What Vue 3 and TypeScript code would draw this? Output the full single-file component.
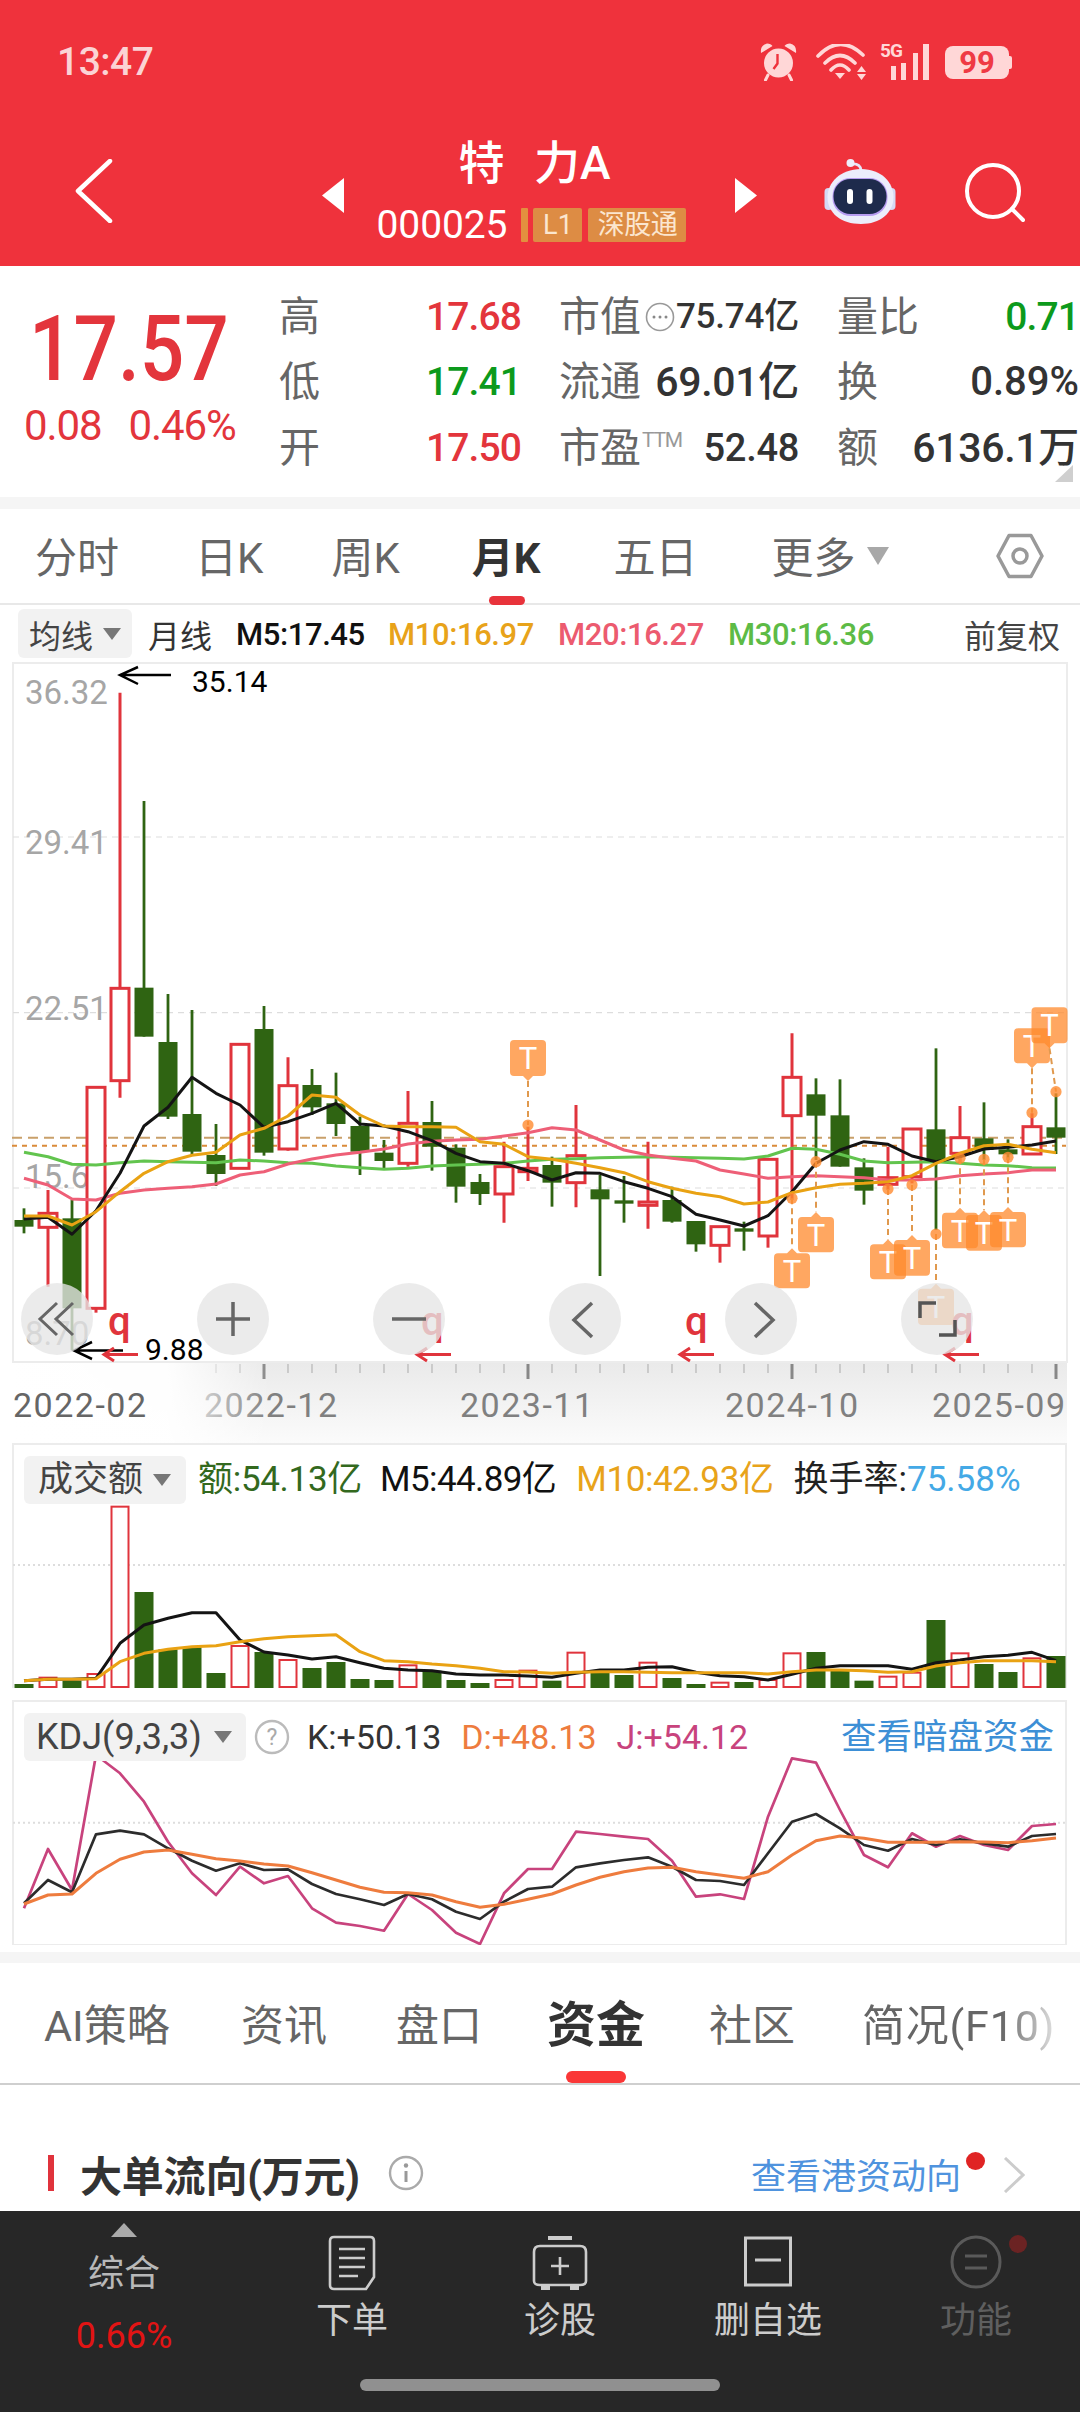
<script setup lang="ts">
type Kind = 'r' | 'g'
interface Candle { k: Kind; h: number; t: number; b: number; l: number }
const ky = (z: number) => 1000 + z / 3
const py = (z: number) => 1440 + z / 3
const cx = (i: number) => 24 + 24 * i

const raw: [Kind, number, number, number, number][] = [
  ['g', 625, 660, 680, 700], ['r', 570, 640, 682, 860], ['g', 600, 655, 925, 1050], ['r', 262, 262, 925, 938],
  ['r', -922, -35, 242, 293], ['g', -597, -37, 110, 110], ['g', -18, 126, 350, 357], ['g', 30, 342, 455, 465],
  ['g', 372, 465, 522, 558], ['r', 133, 133, 505, 505], ['g', 18, 87, 458, 467], ['r', 172, 257, 447, 452],
  ['g', 207, 255, 322, 345], ['g', 218, 310, 372, 408], ['g', 350, 378, 455, 525], ['g', 420, 458, 483, 505],
  ['r', 273, 370, 490, 500], ['g', 303, 366, 440, 512], ['g', 433, 443, 560, 608], ['g', 522, 546, 582, 615],
  ['r', 425, 500, 582, 668], ['r', 380, 505, 515, 543], ['g', 470, 495, 548, 620], ['r', 315, 467, 548, 622],
  ['g', 525, 568, 598, 828], ['g', 528, 601, 611, 668], ['r', 425, 606, 616, 686], ['g', 560, 600, 665, 668],
  ['g', 663, 663, 733, 755], ['r', 680, 680, 736, 788], ['g', 665, 685, 695, 752], ['r', 478, 478, 708, 743],
  ['r', 100, 232, 347, 600], ['g', 235, 283, 347, 480], ['g', 238, 346, 500, 500], ['g', 475, 502, 572, 614],
  ['r', 440, 533, 553, 570], ['r', 387, 387, 530, 550], ['g', 145, 388, 482, 690], ['r', 318, 413, 460, 490],
  ['g', 307, 415, 450, 480], ['g', 418, 448, 463, 480], ['r', 340, 380, 462, 465], ['g', 280, 382, 413, 462],
]
const candles = raw.map(([k, h, t, b, l], i) => {
  const c: Candle = { k, h: ky(h), t: ky(t), b: ky(b), l: ky(l) }
  return { ...c, x: cx(i) }
})

const toLine = (vals: number[], f: (z: number) => number) =>
  vals.map((v, i) => `${cx(i)},${f(v).toFixed(1)}`).join(' ')

const m5 = toLine([657, 652, 703, 632, 520, 378, 322, 232, 280, 315, 382, 365, 340, 310, 372, 378, 395, 422, 460, 485, 490, 512, 540, 518, 520, 545, 565, 590, 643, 660, 678, 647, 575, 490, 450, 425, 433, 468, 485, 470, 447, 442, 435, 423], ky)
const m10 = toLine([648, 648, 675, 635, 575, 520, 485, 466, 457, 405, 385, 348, 285, 292, 345, 378, 380, 380, 382, 425, 433, 470, 478, 490, 503, 518, 545, 565, 580, 590, 612, 606, 578, 563, 553, 550, 545, 527, 490, 460, 437, 433, 448, 458], ky)
const m20 = toLine([535, 555, 597, 600, 580, 570, 565, 560, 552, 525, 515, 492, 477, 465, 457, 447, 432, 424, 420, 418, 408, 398, 383, 390, 420, 450, 465, 475, 483, 510, 522, 535, 530, 527, 530, 533, 540, 540, 537, 527, 522, 518, 510, 510], ky)
const m30 = toLine([457, 470, 493, 495, 488, 483, 485, 487, 488, 480, 483, 488, 490, 498, 503, 508, 505, 498, 495, 493, 490, 483, 478, 476, 473, 472, 470, 472, 473, 475, 477, 468, 445, 448, 463, 483, 488, 487, 485, 490, 495, 497, 503, 504], ky)

interface Badge { x: number; bx: number; dot: number; top: number; bottom: number; up: boolean }
const badges: Badge[] = [
  { x: cx(21), bx: cx(21), dot: ky(375), top: ky(120), bottom: ky(228), up: false },
  { x: cx(32), bx: cx(32), dot: ky(595), top: ky(760), bottom: ky(865), up: true },
  { x: cx(33), bx: cx(33), dot: ky(485), top: ky(651), bottom: ky(757), up: true },
  { x: cx(36), bx: cx(36), dot: ky(567), top: ky(733), bottom: ky(838), up: true },
  { x: cx(37), bx: cx(37), dot: ky(555), top: ky(720), bottom: ky(827), up: true },
  { x: cx(38), bx: cx(38), dot: ky(702), top: ky(866), bottom: ky(975), up: true },
  { x: cx(39), bx: cx(39), dot: ky(475), top: ky(638), bottom: ky(745), up: true },
  { x: cx(40), bx: cx(40), dot: ky(478), top: ky(645), bottom: ky(752), up: true },
  { x: cx(41), bx: cx(41), dot: ky(472), top: ky(636), bottom: ky(742), up: true },
  { x: cx(42), bx: cx(42), dot: ky(338), top: ky(85), bottom: ky(190), up: false },
  { x: cx(43), bx: 1049.5, dot: ky(275), top: ky(22), bottom: ky(130), up: false },
]
const badgePath = (b: Badge) => {
  const l = b.bx - 18, r = b.bx + 18, t = b.top, m = b.bottom, c = b.bx
  if (b.up) {
    return `M${l + 4} ${t}H${c - 5}L${c} ${t - 5}L${c + 5} ${t}H${r - 4}Q${r} ${t} ${r} ${t + 4}V${m - 4}Q${r} ${m} ${r - 4} ${m}H${l + 4}Q${l} ${m} ${l} ${m - 4}V${t + 4}Q${l} ${t} ${l + 4} ${t}Z`
  }
  return `M${l + 4} ${t}H${r - 4}Q${r} ${t} ${r} ${t + 4}V${m - 4}Q${r} ${m} ${r - 4} ${m}H${c + 5}L${c} ${m + 5}L${c - 5} ${m}H${l + 4}Q${l} ${m} ${l} ${m - 4}V${t + 4}Q${l} ${t} ${l + 4} ${t}Z`
}
const badgeLine = (b: Badge) => b.up
  ? `M${b.x} ${b.dot}L${b.bx} ${b.top - 5}`
  : `M${b.bx} ${b.bottom + 5}L${b.x} ${b.dot}`

const smallTicks = Array.from({ length: 44 }, (_, i) => cx(i)).filter((x) => x >= 216 && ![264, 528, 792, 1056].includes(x))
const bigTicks = [264, 528, 792, 1056]
const circles = [57, 233, 409, 585, 761, 937]
const watermarks = [{ q: 108, a: 102 }, { q: 421, a: 415 }, { q: 685, a: 678 }, { q: 951, a: 943 }]

const volTops = [732, 713, 722, 702, 200, 456, 628, 622, 699, 618, 636, 660, 684, 666, 717, 720, 676, 692, 720, 729, 720, 692, 722, 638, 698, 705, 668, 714, 732, 728, 726, 720, 640, 636, 690, 722, 710, 698, 540, 640, 672, 696, 655, 648]
const bars = volTops.map((z, i) => ({ x: cx(i), y: py(z), h: 1688 - py(z), k: raw[i][0] }))
const vm5 = toLine([722, 718, 718, 715, 610, 555, 535, 518, 518, 600, 636, 645, 657, 650, 668, 685, 690, 692, 702, 705, 705, 708, 712, 700, 690, 690, 682, 680, 697, 707, 710, 720, 703, 685, 677, 677, 677, 688, 668, 660, 650, 646, 637, 662], py)
const vm10 = toLine([722, 718, 718, 716, 665, 640, 628, 620, 617, 605, 596, 590, 587, 584, 635, 662, 665, 672, 677, 685, 695, 696, 700, 697, 695, 695, 697, 698, 698, 698, 698, 702, 695, 690, 690, 692, 697, 695, 678, 668, 662, 662, 662, 665], py)

const kLine = toLine([1390, 1320, 1357, 1183, 1172, 1183, 1225, 1262, 1292, 1270, 1290, 1288, 1332, 1362, 1378, 1395, 1362, 1378, 1415, 1437, 1385, 1347, 1340, 1282, 1270, 1260, 1252, 1280, 1320, 1323, 1335, 1240, 1145, 1122, 1165, 1215, 1232, 1197, 1215, 1198, 1210, 1220, 1188, 1182], py)
const dLine = toLine([1392, 1365, 1362, 1300, 1258, 1236, 1230, 1243, 1256, 1263, 1272, 1278, 1298, 1320, 1342, 1357, 1358, 1365, 1385, 1402, 1393, 1378, 1362, 1335, 1312, 1295, 1284, 1282, 1295, 1305, 1315, 1295, 1245, 1202, 1188, 1195, 1207, 1207, 1207, 1205, 1206, 1208, 1202, 1194], py)
const jLine = toLine([1405, 1227, 1350, 945, 1000, 1085, 1205, 1300, 1365, 1280, 1330, 1308, 1405, 1448, 1458, 1472, 1362, 1410, 1478, 1512, 1360, 1287, 1287, 1175, 1182, 1190, 1197, 1262, 1370, 1363, 1377, 1130, 955, 968, 1110, 1245, 1282, 1180, 1220, 1188, 1215, 1230, 1158, 1152], py)

const periods = ['分时', '日K', '周K', '月K', '五日']
const stats = [
  { label: '高', value: '17.68', cls: 'up' }, { label: '市值', icon: true, value: '75.74亿', cls: 'dark s35' }, { label: '量比', value: '0.71', cls: 'down' },
  { label: '低', value: '17.41', cls: 'down' }, { label: '流通', value: '69.01亿', cls: 'dark s41' }, { label: '换', value: '0.89%', cls: 'dark s40' },
  { label: '开', value: '17.50', cls: 'up' }, { label: '市盈', sup: 'TTM', value: '52.48', cls: 'dark s38' }, { label: '额', value: '6136.1万', cls: 'dark s41' },
]
const lowerTabs = ['AI策略', '资讯', '盘口', '资金', '社区', '简况(F10)']
</script>

<template>
  <div class="app">
    <header class="head">
      <div class="status">
        <span class="time">13:47</span>
        <div class="status-icons">
          <svg class="ic-alarm" width="38" height="38" viewBox="0 0 38 38">
            <circle cx="18.5" cy="20" r="14.5" fill="#ffd7d7" />
            <path d="M17.5 11V20.5L13.5 26" fill="none" stroke="#ef323c" stroke-width="2.4" />
            <path d="M1 10Q0 2 7 0.5Q11 0.5 12.5 3ZM36 10Q37 2 30 0.5Q26 0.5 24.5 3Z" fill="#ffd7d7" />
            <path d="M8 32L5.5 37M29 32L31.5 37" fill="none" stroke="#ffd7d7" stroke-width="3" stroke-linecap="round" />
          </svg>
          <svg class="ic-wifi" width="51" height="36" viewBox="0 0 51 36">
            <path d="M2 12Q24 -11 47 11M9 19Q24 4 39 19M15 26Q24 16 33 26" fill="none" stroke="#ffd7d7" stroke-width="3.6" stroke-linecap="round" />
            <path d="M19 29H29L24 35Z" fill="#ffd7d7" />
            <path d="M41 28H50L45.5 22ZM41 30H50L45.5 36Z" fill="#ffd7d7" />
          </svg>
          <div class="signal">
            <span class="five-g">5G</span>
            <svg width="40" height="36" viewBox="0 0 40 36">
              <path d="M2 22H7V36H2ZM12 19H17V36H12ZM24 9H29V36H24ZM34 0H40V36H34Z" fill="#ffd7d7" />
            </svg>
          </div>
          <div class="battery"><span>99</span></div>
        </div>
      </div>
      <nav class="nav">
        <svg class="back" width="38" height="64" viewBox="0 0 38 64">
          <path d="M35 2L3 32L35 62" fill="none" stroke="#fff" stroke-width="4.5" stroke-linecap="round" stroke-linejoin="round" />
        </svg>
        <svg class="tri-l" width="22" height="35" viewBox="0 0 22 35"><path d="M22 0V35L0 17.5Z" fill="#fff" /></svg>
        <div class="title-block">
          <div class="title">特 力A</div>
          <div class="code-row">
            <span class="code">000025</span>
            <i class="tag-bar"></i>
            <span class="tag tag-l1">L1</span>
            <span class="tag tag-sg">深股通</span>
          </div>
        </div>
        <svg class="tri-r" width="22" height="35" viewBox="0 0 22 35"><path d="M0 0V35L22 17.5Z" fill="#fff" /></svg>
        <svg class="robot" width="72" height="66" viewBox="0 0 72 66">
          <path d="M27 5Q36 4 37 11" fill="none" stroke="#e6e6f8" stroke-width="2.6" />
          <circle cx="26.5" cy="4" r="4" fill="#eeeefa" />
          <rect x="0.5" y="29" width="8" height="22" rx="4" fill="#d5d9f5" />
          <rect x="63.5" y="29" width="8" height="22" rx="4" fill="#d5d9f5" />
          <path d="M37 10C58 10 69.500 24 69.500 38C69.500 54 56 65 37 65C17 65 3.500 54 3.500 38C3.500 24 16 10 37 10Z" fill="#ecedfb" />
          <rect x="8.500" y="19" width="55" height="38" rx="18" fill="#b79cf0" />
          <rect x="9.500" y="20" width="53" height="35" rx="17" fill="#1e2b4c" />
          <rect x="23" y="30" width="6" height="15" rx="3" fill="#fff" />
          <rect x="42.500" y="30" width="6" height="15" rx="3" fill="#fff" />
        </svg>
        <svg class="search" width="60" height="62" viewBox="0 0 60 62">
          <circle cx="28" cy="30" r="26" fill="none" stroke="#fff" stroke-width="4" />
          <path d="M47 48L58 59" stroke="#fff" stroke-width="4" stroke-linecap="round" />
        </svg>
      </nav>
    </header>

    <section class="stats">
      <div class="price">
        <div class="price-main">17.57</div>
        <div class="price-sub"><span>0.08</span><span>0.46%</span></div>
      </div>
      <div class="stat-grid">
        <div v-for="s in stats" :key="s.label" class="stat">
          <span class="stat-label">{{ s.label }}<svg v-if="s.icon" class="chat" width="30" height="30" viewBox="0 0 30 30"><circle cx="15" cy="15" r="13.5" fill="none" stroke="#999" stroke-width="1.6" /><circle cx="9" cy="15" r="1.5" fill="#888" /><circle cx="15" cy="15" r="1.5" fill="#888" /><circle cx="21" cy="15" r="1.5" fill="#888" /></svg><sup v-if="s.sup">{{ s.sup }}</sup></span>
          <span class="stat-val" :class="s.cls">{{ s.value }}</span>
        </div>
      </div>
      <i class="corner"></i>
    </section>
    <div class="gap gap-a"></div>

    <section class="periods">
      <span v-for="(p, i) in periods" :key="p" class="period" :class="{ on: i === 3 }">{{ p }}</span>
      <span class="period more">更多<i class="tri-down"></i></span>
      <svg class="hex" width="48" height="46" viewBox="0 0 48 46">
        <path d="M13 2.5H35L46 23L35 43.5H13L2 23Z" fill="none" stroke="#999" stroke-width="3.5" stroke-linejoin="round" />
        <circle cx="24" cy="23" r="7" fill="none" stroke="#999" stroke-width="3.5" />
      </svg>
    </section>

    <section class="legend">
      <span class="chip chip-ma">均线<i class="tri-chip"></i></span>
      <span class="lg-cn">月线</span>
      <span class="lg lg-m5">M5:17.45</span>
      <span class="lg lg-m10">M10:16.97</span>
      <span class="lg lg-m20">M20:16.27</span>
      <span class="lg lg-m30">M30:16.36</span>
      <span class="lg-fq">前复权</span>
    </section>

    <svg class="kchart" width="1080" height="781" viewBox="0 662 1080 781">
      <defs>
        <linearGradient id="axisFade" x1="0" y1="0" x2="0" y2="1">
          <stop offset="0" stop-color="#eaeaea" />
          <stop offset="1" stop-color="#fbfbfb" />
        </linearGradient>
        <linearGradient id="axisMask" x1="0" y1="0" x2="1" y2="0">
          <stop offset="0" stop-color="#fff" />
          <stop offset="0.62" stop-color="#fff" stop-opacity="0.95" />
          <stop offset="1" stop-color="#fff" stop-opacity="0" />
        </linearGradient>
      </defs>
      <rect x="13" y="663" width="1054" height="699" fill="#fff" stroke="#ececec" stroke-width="2" />
      <g stroke="#ddd" stroke-width="1.2" stroke-dasharray="6 5">
        <path d="M13 837H1064M13 1012.7H1064M13 1188H1064" />
      </g>
      <g class="axis-label" fill="#a6a6a6" font-size="33">
        <text x="25" y="704">36.32</text>
        <text x="25" y="854">29.41</text>
        <text x="25" y="1020">22.51</text>
        <text x="25" y="1188">15.60</text>
        <text x="25" y="1345">8.70</text>
      </g>
      <g class="mono" fill="#000" font-size="30">
        <text x="192" y="692">35.14</text>
        <text x="145" y="1360">9.88</text>
      </g>
      <path d="M171 675H121M138 667L120 675L138 684" fill="none" stroke="#000" stroke-width="2.5" />
      <path d="M123 1350.5H75M92 1342L74 1350.5L92 1359" fill="none" stroke="#000" stroke-width="2.5" />

      <path d="M12 1137.7H1066" stroke="#c9a06a" stroke-width="2" stroke-dasharray="10 6" />
      <path d="M12 1145.7H1066" stroke="#da8b3a" stroke-width="2" stroke-dasharray="5 5" />

      <g v-for="(c, i) in candles" :key="i">
        <template v-if="c.k === 'r'">
          <path :d="`M${c.x} ${c.h}V${c.t}M${c.x} ${c.b}V${c.l}`" stroke="#e0343c" stroke-width="3" />
          <rect :x="c.x - 9" :y="c.t" width="18" :height="c.b - c.t" fill="#fff" stroke="#e0343c" stroke-width="3" />
        </template>
        <template v-else>
          <path :d="`M${c.x} ${c.h}V${c.l}`" stroke="#2f6412" stroke-width="2.8" />
          <rect :x="c.x - 9.5" :y="c.t" width="19" :height="c.b - c.t" fill="#2f6412" />
        </template>
      </g>

      <g fill="none" stroke-width="3" stroke-linejoin="round">
        <polyline :points="m30" stroke="#62c44e" />
        <polyline :points="m20" stroke="#ee5f77" />
        <polyline :points="m5" stroke="#141414" />
        <polyline :points="m10" stroke="#e9a213" />
      </g>

      <g v-for="(b, i) in badges" :key="'b' + i">
        <path :d="badgeLine(b)" stroke="#e0994e" stroke-width="2" stroke-dasharray="6 4" />
        <circle :cx="b.x" :cy="b.dot" r="5.6" fill="#ff8b2f" fill-opacity="0.8" />
        <path :d="badgePath(b)" fill="#ff8a2c" fill-opacity="0.75" />
        <text class="t-mark" :x="b.bx" :y="(b.top + b.bottom) / 2 + 11" text-anchor="middle" fill="#fff" font-size="31">T</text>
      </g>

      <g v-for="w in watermarks" :key="w.q">
        <text class="mono" :x="w.q" y="1335" fill="#e0343c" font-size="40" font-weight="500">q</text>
        <path :d="`M${w.a + 36} 1354.5H${w.a + 2}M${w.a + 12} 1348L${w.a + 2} 1354.5L${w.a + 12} 1361`" fill="none" stroke="#e0343c" stroke-width="3" />
      </g>

      <rect x="13" y="1363" width="1054" height="80" fill="url(#axisFade)" />
      <g stroke="#bdbdbd" stroke-width="1.4">
        <path v-for="x in smallTicks" :key="x" :d="`M${x} 1364V1373`" />
      </g>
      <g stroke="#888" stroke-width="3">
        <path v-for="x in bigTicks" :key="x" :d="`M${x} 1364V1379`" />
      </g>
      <g class="date" fill="#808080" font-size="34">
        <text x="204" y="1417">2022-12</text>
        <text x="460" y="1417">2023-11</text>
        <text x="725" y="1417">2024-10</text>
        <text x="932" y="1417">2025-09</text>
      </g>
      <rect x="0" y="1363" width="270" height="80" fill="url(#axisMask)" />
      <text class="date" x="13" y="1417" fill="#666" font-size="34">2022-02</text>

      <circle v-for="x in circles" :key="x" :cx="x" cy="1319" r="36" fill="#e6e6e6" fill-opacity="0.78" />
      <g fill="none" stroke="#666" stroke-width="3.5">
        <path d="M57 1303L40 1319L57 1335M73 1303L56 1319L73 1335" stroke-width="3" />
        <path d="M216 1319H250M233 1302V1336" />
        <path d="M392 1319H426" />
        <path d="M592 1303L574 1320L592 1337" />
        <path d="M755 1303L773 1320L755 1337" />
        <path d="M920 1318V1303H936M955 1320V1335H939" stroke="#555" />
      </g>
    </svg>

    <section class="panel vol">
      <svg width="1080" height="245" viewBox="0 1443 1080 245">
        <path d="M13 1688V1444H1066V1688" fill="none" stroke="#ececec" stroke-width="2" />
        <path d="M13 1565H1066" stroke="#ddd" stroke-width="2" stroke-dasharray="2 3" />
        <g v-for="(b, i) in bars" :key="i">
          <rect v-if="b.k === 'g'" :x="b.x - 9.5" :y="b.y" width="19" :height="b.h" fill="#2f6412" />
          <rect v-else :x="b.x - 8.5" :y="b.y" width="17" :height="b.h - 1" fill="#fff" stroke="#e0343c" stroke-width="2" />
        </g>
        <g fill="none" stroke-width="3" stroke-linejoin="round">
          <polyline :points="vm5" stroke="#141414" />
          <polyline :points="vm10" stroke="#e9a213" />
        </g>
      </svg>
      <div class="panel-head">
        <span class="chip chip-vol">成交额<i class="tri-chip"></i></span>
        <span class="v-amt">额:54.13亿</span>
        <span class="v-m5">M5:44.89亿</span>
        <span class="v-m10">M10:42.93亿</span>
        <span class="v-hs">换手率:<b>75.58%</b></span>
      </div>
    </section>

    <section class="panel kdj">
      <svg width="1080" height="245" viewBox="0 1700 1080 245">
        <path d="M13 1945V1701H1066V1945Z" fill="none" stroke="#ececec" stroke-width="2" />
        <path d="M13 1822.7H1066" stroke="#ddd" stroke-width="2" stroke-dasharray="2 3" />
        <g fill="none" stroke-linejoin="round">
          <polyline :points="jLine" stroke="#c8437d" stroke-width="2.7" />
          <polyline :points="kLine" stroke="#2c2c2c" stroke-width="2.7" />
          <polyline :points="dLine" stroke="#ee7c3e" stroke-width="3" />
        </g>
      </svg>
      <div class="panel-head">
        <span class="chip chip-kdj">KDJ(9,3,3)<i class="tri-chip"></i></span>
        <svg class="help" width="36" height="36" viewBox="0 0 36 36">
          <circle cx="18" cy="18" r="16" fill="none" stroke="#bbb" stroke-width="2.4" />
          <text x="18" y="26" text-anchor="middle" fill="#aaa" font-size="23" class="mono">?</text>
        </svg>
        <span class="k-k">K:+50.13</span>
        <span class="k-d">D:+48.13</span>
        <span class="k-j">J:+54.12</span>
        <span class="k-link">查看暗盘资金</span>
      </div>
    </section>
    <div class="gap gap-b"></div>

    <section class="lower-tabs">
      <span v-for="(t, i) in lowerTabs" :key="t" class="ltab" :class="{ on: i === 3, fade: i === 5 }">{{ t }}</span>
      <i class="ltab-bar"></i>
    </section>

    <section class="flow-head">
      <i class="flow-mark"></i>
      <span class="flow-title">大单流向(万元)</span>
      <svg class="info" width="36" height="36" viewBox="0 0 36 36">
        <circle cx="18" cy="18" r="16" fill="none" stroke="#aaa" stroke-width="2.4" />
        <circle cx="18" cy="10.5" r="2.2" fill="#999" />
        <path d="M18 16V27" stroke="#999" stroke-width="3" />
      </svg>
      <span class="flow-link">查看港资动向<i class="dot"></i></span>
      <svg class="chev" width="22" height="36" viewBox="0 0 22 36"><path d="M2 1L20 18L2 35" fill="none" stroke="#ccc" stroke-width="3" /></svg>
    </section>

    <footer class="bar">
      <div class="bar-item first">
        <svg width="26" height="14" viewBox="0 0 26 14"><path d="M13 0L26 14H0Z" fill="#aaa" /></svg>
        <span class="first-name">综合</span>
        <span class="first-val">0.66%</span>
      </div>
      <div class="bar-item">
        <svg class="bi" width="48" height="56" viewBox="0 0 48 56" fill="none" stroke="#ccc" stroke-width="2.6">
          <path d="M6 2H42Q46 2 46 6V42L38 54H6Q2 54 2 50V6Q2 2 6 2Z" />
          <path d="M11 14H37M11 23H37M11 32H37M11 41H30" />
        </svg>
        <span class="bar-label">下单</span>
      </div>
      <div class="bar-item">
        <svg class="bi" width="56" height="56" viewBox="0 0 56 56" fill="none" stroke="#ccc" stroke-width="2.6">
          <path d="M16 3H40" stroke-width="4" />
          <path d="M8 11H48Q54 11 54 17V46Q54 50 48 50H8Q2 50 2 46V17Q2 11 8 11Z" />
          <path d="M28 22V40M19 31H37" />
          <path d="M9 53H18M38 53H47" stroke-width="4" />
        </svg>
        <span class="bar-label">诊股</span>
      </div>
      <div class="bar-item">
        <svg class="bi" width="48" height="56" viewBox="0 0 48 56" fill="none" stroke="#ccc" stroke-width="3">
          <rect x="1.5" y="3" width="45" height="47" />
          <path d="M11 25H37" />
        </svg>
        <span class="bar-label">删自选</span>
      </div>
      <div class="bar-item dim">
        <svg class="bi" width="52" height="56" viewBox="0 0 52 56" fill="none" stroke="#5a5a5a" stroke-width="3">
          <ellipse cx="26" cy="27" rx="24" ry="25" />
          <path d="M15 21H37M15 33H37" />
        </svg>
        <span class="bar-label">功能</span>
        <i class="bar-dot"></i>
      </div>
      <i class="home"></i>
    </footer>
  </div>
</template>

<style>
html, body { margin: 0; padding: 0; background: #fff; }
</style>

<style scoped>
.app {
  position: relative; width: 1080px; height: 2412px; overflow: hidden; display: flex; flex-direction: column;
  background: #fff; color: #333; font-family: Roboto, "Noto Sans CJK SC", sans-serif;
}
i { display: block; font-style: normal; }
.head { height: 266px; background: #ef323c; color: #fff; flex: none; }
.status { height: 124px; display: flex; align-items: center; justify-content: space-between; padding: 0 71px 0 57px; box-sizing: border-box; }
.time { font-size: 39px; color: #fbd3d5; letter-spacing: -0.5px; font-weight: 500; }
.status-icons { display: flex; align-items: center; }
.ic-wifi { margin-left: 18px; }
.signal { position: relative; margin-left: 22px; width: 40px; height: 36px; }
.signal svg { display: block; }
.five-g { position: absolute; left: -9px; top: -1px; font-size: 19px; line-height: 16px; color: #ffd7d7; font-weight: 700; letter-spacing: -0.8px; }
.battery { margin-left: 16px; width: 64px; height: 33px; background: #ffd7d7; border-radius: 8px; position: relative; display: flex; align-items: center; justify-content: center; }
.battery span { color: #ef3a44; font-size: 31px; font-weight: 700; line-height: 33px; }
.battery::after { content: ""; position: absolute; right: -3px; top: 10px; width: 3px; height: 13px; background: #ffd7d7; border-radius: 0 2px 2px 0; }
.nav { height: 142px; display: flex; align-items: center; position: relative; }
.back { margin-left: 75px; margin-top: -8px; flex: none; }
.tri-l { margin-left: 209px; flex: none; }
.tri-r { flex: none; }
.title-block { width: 391px; flex: none; display: flex; flex-direction: column; align-items: center; padding-right: 16px; box-sizing: border-box; margin-top: -1px; }
.title { font-size: 46px; line-height: 50px; word-spacing: 18px; font-weight: 500; margin-bottom: 20px; margin-left: 6px; margin-top: -9px; }
.code-row { display: flex; align-items: center; height: 34px; }
.code { font-size: 39px; line-height: 34px; letter-spacing: -0.1px; }
.tag-bar { width: 7px; height: 34px; background: #e38f3f; margin-left: 14px; border-radius: 1px; }
.tag { height: 34px; line-height: 34px; background: #dd8c44; color: #fbe6cf; text-align: center; border-radius: 2px; font-size: 27px; }
.tag-l1 { width: 49px; margin-left: 5px; }
.tag-sg { width: 98px; margin-left: 6px; letter-spacing: -0.6px; }
.robot { margin-left: 67px; margin-top: -6px; flex: none; }
.search { margin-left: 69px; margin-top: -6px; flex: none; }

.stats { height: 231px; flex: none; display: flex; position: relative; }
.price { width: 281px; flex: none; display: flex; flex-direction: column; align-items: flex-start; box-sizing: border-box; padding-top: 50px; }
.price-main { font-size: 90px; line-height: 68px; color: #e3353c; font-weight: 500; margin-left: 29px; width: 226px; transform: scaleX(0.87); transform-origin: left center; white-space: nowrap; }
.price-sub { display: flex; gap: 27px; margin-top: 24px; margin-left: 24px; font-size: 42px; line-height: 36px; color: #e3353c; letter-spacing: -1.1px; }
.stat-grid { display: grid; grid-template-columns: 240px 238px 240px; column-gap: 40px; grid-auto-rows: 65.5px; padding-top: 18px; }
.stat { display: flex; align-items: center; justify-content: space-between; white-space: nowrap; }
.stat-label { font-size: 41px; color: #666; display: flex; align-items: center; line-height: 50px; margin-left: -2px; }
.stat-label sup { font-size: 21px; line-height: 20px; color: #999; align-self: flex-start; margin-top: 7px; margin-left: 1px; letter-spacing: -1.2px; }
.chat { margin-left: 4px; }
.stat-val { font-size: 39px; line-height: 50px; letter-spacing: -0.9px; font-weight: 500; }
.stat-val.up { color: #e3353c; }
.stat-val.down { color: #0c9a1c; }
.stat-val.dark { color: #333; }
.stat-val.s35 { font-size: 35px; letter-spacing: -0.2px; }
.stat-val.s38 { font-size: 38px; letter-spacing: -0.3px; }
.stat-val.s40 { font-size: 40px; letter-spacing: 0; }
.stat-val.s41 { font-size: 41px; letter-spacing: -0.3px; }
.corner { position: absolute; right: 7px; bottom: 15px; width: 0; height: 0; border-left: 18px solid transparent; border-bottom: 17px solid #cfcfcf; }
.gap { background: #f5f5f5; flex: none; }
.gap-a { height: 12px; }
.gap-b { height: 11px; }

.periods { height: 96px; flex: none; display: flex; align-items: center; position: relative; box-sizing: border-box; border-bottom: 2px solid #e8e8e8; padding-left: 35px; padding-top: 6px; }
.period { font-size: 42px; line-height: 50px; color: #666; white-space: nowrap; }
.period:nth-child(2) { margin-left: 76px; }
.period:nth-child(3) { margin-left: 68px; }
.period:nth-child(4) { margin-left: 72px; }
.period:nth-child(5) { margin-left: 73px; }
.period.on { color: #333; font-weight: 700; position: relative; }
.period.on::after { content: ""; position: absolute; left: 17px; width: 36px; top: 62px; height: 9px; border-radius: 5px; background: #e8333b; }
.more { margin-left: 74px; display: flex; align-items: center; }
.tri-down { margin-left: 12px; margin-top: -6px; width: 0; height: 0; border-left: 11px solid transparent; border-right: 11px solid transparent; border-top: 18px solid #a8a8a8; }
.hex { position: absolute; left: 996px; top: 24px; }

.legend { height: 57px; flex: none; display: flex; align-items: center; white-space: nowrap; position: relative; }
.chip { background: #f2f2f2; border-radius: 6px; display: flex; align-items: center; color: #444; flex: none; box-sizing: border-box; }
.chip-ma { width: 114px; height: 49px; margin-left: 18px; padding-left: 11px; font-size: 32px; }
.tri-chip { width: 0; height: 0; border-left: 9px solid transparent; border-right: 9px solid transparent; border-top: 12px solid #777; margin-left: 10px; }
.lg-cn { margin-left: 16px; font-size: 32px; color: #333; }
.lg { position: absolute; top: 10px; font-size: 31px; font-weight: 500; letter-spacing: -0.4px; line-height: 40px; }
.lg-m5 { left: 236px; color: #111; }
.lg-m10 { left: 388px; color: #e8a31a; }
.lg-m20 { left: 558px; color: #ec5b6f; }
.lg-m30 { left: 728px; color: #5dbb46; }
.lg-fq { position: absolute; left: 964px; font-size: 32px; color: #444; }

.kchart { display: block; flex: none; }
.axis-label text, .date text, .date, .mono, .mono text { font-family: Roboto, sans-serif; }
.date, .date text { letter-spacing: 1.5px; }
.t-mark { font-family: Roboto, sans-serif; }

.panel { height: 257px; flex: none; position: relative; }
.panel svg:first-child { display: block; }
.kdj { height: 252px; }
.panel-head { position: absolute; left: 24px; top: 13px; display: flex; align-items: center; white-space: nowrap; font-size: 35px; line-height: 48px; }
.kdj .panel-head { top: 13px; right: 26px; font-size: 34px; }
.chip-vol { width: 162px; height: 48px; padding-left: 14px; font-size: 35px; }
.chip-kdj { width: 222px; height: 48px; padding-left: 12px; font-size: 36px; }
.chip-kdj .tri-chip { margin-left: 12px; }
.v-amt { color: #33691e; margin-left: 12px; letter-spacing: -0.3px; }
.v-m5 { color: #111; margin-left: 18px; letter-spacing: -0.6px; }
.v-m10 { color: #e8a31a; margin-left: 20px; letter-spacing: -0.4px; }
.v-hs { color: #222; margin-left: 20px; }
.v-hs b { color: #44a9e6; font-weight: 400; }
.help { margin-left: 8px; flex: none; }
.k-k { color: #333; margin-left: 17px; }
.k-d { color: #ee7c3e; margin-left: 20px; }
.k-j { color: #c8437d; margin-left: 20px; }
.k-link { color: #3d8fd6; margin-left: auto; font-size: 35.5px; }

.lower-tabs { height: 122px; flex: none; position: relative; display: flex; align-items: center; box-sizing: border-box; border-bottom: 2px solid #cfcfcf; padding-bottom: 0; }
.ltab { position: absolute; font-size: 43px; line-height: 60px; top: 33px; color: #666; white-space: nowrap; }
.ltab:nth-child(1) { left: 44px; }
.ltab:nth-child(2) { left: 241px; }
.ltab:nth-child(3) { left: 396px; }
.ltab:nth-child(4) { left: 547px; font-size: 49px; font-weight: 700; color: #333; }
.ltab:nth-child(5) { left: 709px; }
.ltab:nth-child(6) { left: 862px; font-size: 43px; letter-spacing: 0.8px; -webkit-mask-image: linear-gradient(to right, #000 72%, rgba(0,0,0,0.2) 100%); mask-image: linear-gradient(to right, #000 72%, rgba(0,0,0,0.2) 100%); }
.ltab-bar { position: absolute; left: 566px; width: 60px; bottom: 0; height: 12px; border-radius: 6px; background: #fa3737; }

.flow-head { height: 126px; flex: none; position: relative; display: flex; align-items: center; box-sizing: border-box; padding-top: 50px; }
.flow-mark { width: 6px; height: 36px; background: #e0333c; margin-left: 48px; flex: none; }
.flow-title { font-size: 42px; font-weight: 700; color: #333; margin-left: 26px; letter-spacing: -0.2px; white-space: nowrap; }
.info { margin-left: 28px; flex: none; }
.flow-link { position: absolute; left: 751px; font-size: 35px; color: #4f93de; white-space: nowrap; }
.dot { position: absolute; right: -24px; top: 4px; width: 19px; height: 18px; background: #e02424; border-radius: 50%; }
.chev { position: absolute; left: 1003px; top: 72px; }

.bar { flex: 1; background: #272727; display: grid; grid-template-columns: 248px 208px 208px 208px 208px; position: relative; }
.bar-item { display: flex; flex-direction: column; align-items: center; padding-top: 24px; position: relative; }
.bi { height: 56px; flex: none; }
.bar-label { font-size: 36px; line-height: 40px; color: #ccc; margin-top: 10px; white-space: nowrap; }
.first { padding-top: 12px; }
.first-name { font-size: 36px; line-height: 40px; color: #b8b8b8; margin-top: 17px; }
.first-val { font-size: 36px; line-height: 40px; color: #e21414; margin-top: 22px; }
.dim .bar-label { color: #5f5f5f; }
.bar-dot { position: absolute; left: 137px; top: 24px; width: 18px; height: 18px; border-radius: 50%; background: #6b2323; }
.home { position: absolute; left: 360px; top: 168px; width: 360px; height: 12px; border-radius: 6px; background: #909090; }
</style>
